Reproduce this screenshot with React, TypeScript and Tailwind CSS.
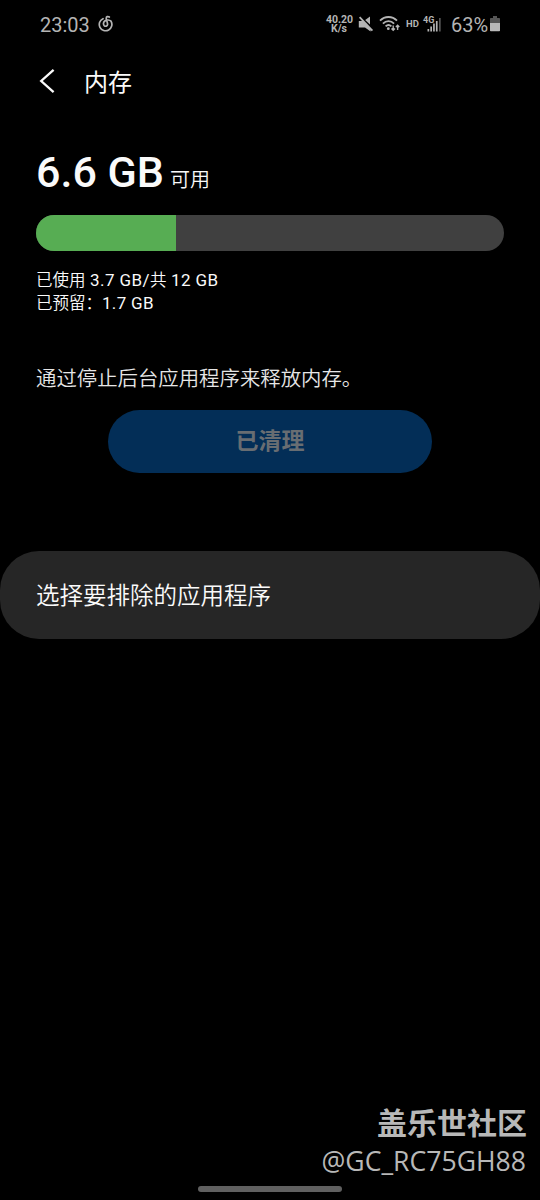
import type { ReactNode } from "react";

const USED_PERCENT = 30;

function MusicIcon() {
  return (
    <svg width="16" height="18" viewBox="0 0 16 18" fill="none" stroke="#b4b4b4" strokeWidth="1.7" strokeLinecap="round">
      <path d="M5 3.7A6.3 6.3 0 1 0 13 6.2C11.6 4.7 8.6 4.6 6.8 6C5.1 7.4 5.2 9.5 6.2 10.6C7.4 11.8 9.5 11.2 9.6 9.4C9.6 7.8 8.2 4.6 8.2 3.2C8.3 1.6 9.9 1.1 11.3 2" />
    </svg>
  );
}

function MuteIcon() {
  return (
    <svg width="16" height="18" viewBox="0 0 16 18" fill="#b4b4b4">
      <path d="M0.8 6H5L12.6 13.6V16.6L7 12.6H0.8Z" />
      <path d="M7.2 4.9L12 1.4V9.6Z" />
      <path d="M1.6 2.2L14.4 15.6" stroke="#b4b4b4" strokeWidth="1.8" />
    </svg>
  );
}

function WifiIcon() {
  return (
    <svg width="22" height="18" viewBox="0 0 22 18" fill="none" stroke="#b4b4b4" strokeWidth="1.8">
      <path d="M1 5.6C5.8 0.8 13.2 0.8 18 5.6" />
      <path d="M3.9 8.6C7.2 5.4 11.8 5.4 15.1 8.6" />
      <path d="M6.6 11.4C8.3 9.8 10.7 9.8 12.4 11.4" />
      <circle cx="9.3" cy="13.7" r="1.4" fill="#b4b4b4" stroke="none" />
      <path d="M14.2 10.6V15M12.5 13.4L14.2 15.2L15.9 13.4M18.6 15V10.4M16.9 12L18.6 10.2L20.3 12" strokeWidth="1.4" />
    </svg>
  );
}

function SignalIcon() {
  return (
    <svg width="15" height="14" viewBox="0 0 15 14" fill="#b4b4b4">
      <rect x="0.5" y="11" width="1.7" height="2.5" />
      <rect x="3.3" y="8.5" width="1.7" height="5" />
      <rect x="6.1" y="5.5" width="1.7" height="8" />
      <rect x="8.9" y="3" width="1.7" height="10.5" />
      <rect x="12" y="0" width="1.7" height="13.5" fill="#555555" />
    </svg>
  );
}

function BatteryIcon() {
  return (
    <svg width="10" height="16" viewBox="0 0 10 16">
      <path d="M3 0H7V2H9.2Q10 2 10 2.8V7H0V2.8Q0 2 0.8 2H3Z" fill="#555555" />
      <path d="M0 7H10V14.4Q10 15.2 9.2 15.2H0.8Q0 15.2 0 14.4Z" fill="#b9b9b9" />
    </svg>
  );
}

function StatusBar() {
  return (
    <header className="flex h-12 items-center pr-10 pl-10 text-[#b4b4b4]">
      <span className="text-[20px] leading-6 pt-0.5">23:03</span>
      <div className="ml-[8px]">
        <MusicIcon />
      </div>
      <div className="ml-auto flex items-center">
        <div className="w-[26px] text-center text-[10.5px] leading-[9px] font-bold">
          <p>40.20</p>
          <p>K/s</p>
        </div>
        <div className="ml-[6px]">
          <MuteIcon />
        </div>
        <div className="ml-[5px]">
          <WifiIcon />
        </div>
        <span className="ml-[5px] w-[15px] text-[9.5px] leading-3 font-bold">HD</span>
        <div className="relative ml-[6px] pt-[1px]">
          <SignalIcon />
          <span className="absolute -top-[2px] -left-[4px] text-[9px] leading-[10px] font-bold">4G</span>
        </div>
        <span className="ml-[9px] w-[39px] pt-0.5 text-[20px] leading-6">63%</span>
        <BatteryIcon />
      </div>
    </header>
  );
}

function TitleBar({ children }: { children: ReactNode }) {
  return (
    <div className="flex h-[66px] items-center pl-[39px]">
      <svg width="16" height="26" viewBox="0 0 16 26" fill="none" stroke="#fafafa" strokeWidth="2.3">
        <path d="M14.6 1.8L2.2 13L14.6 24.2" />
      </svg>
      <h1 className="ml-[29px] pt-1 text-[24px] leading-8">{children}</h1>
    </div>
  );
}

export default function App() {
  return (
    <div className="relative flex h-[1200px] w-[540px] flex-col overflow-hidden bg-black font-[Roboto,'Noto_Sans_CJK_SC',sans-serif] text-[#fafafa]">
      <StatusBar />
      <TitleBar>内存</TitleBar>

      <main className="flex flex-col">
        <section className="px-9 pt-[28px]">
          <p className="flex h-[60px] items-baseline leading-[60px]">
            <span className="text-[43px] font-medium">6.6 GB</span>
            <span className="ml-[6px] text-[20px] font-[350]">可用</span>
          </p>
          <div className="mt-[13px] h-9 overflow-hidden rounded-full bg-[#404040]">
            <div className="h-full bg-[#57ad53]" style={{ width: `${USED_PERCENT}%` }} />
          </div>
          <div className="mt-[18px] text-[16.5px] leading-[23px]">
            <p className="font-[350]">
              已使用<span className="text-[17px] font-normal tracking-[0.4px]"> 3.7 GB/</span>共
              <span className="text-[17px] font-normal tracking-[0.4px]"> 12 GB</span>
            </p>
            <p className="font-[350]">
              已预留：<span className="text-[17px] font-normal tracking-[0.3px]">1.7 GB</span>
            </p>
          </div>
        </section>

        <section className="mt-[49px] px-9">
          <p className="text-[20.4px] leading-[30px] font-[350] text-[#e6e6e6]">通过停止后台应用程序来释放内存。</p>
          <button
            type="button"
            disabled
            className="mx-auto mt-[15.5px] block h-[63px] w-[324px] rounded-full bg-[#032e57] pt-[3px] text-[23px] font-bold text-[#686d72]"
          >
            已清理
          </button>
        </section>

        <button
          type="button"
          className="mt-[78px] flex h-[88px] w-full items-center rounded-[39px] bg-[#262626] pt-1 pl-9 text-[23.5px] font-[350]"
        >
          选择要排除的应用程序
        </button>
      </main>

      <footer className="mt-auto flex flex-col items-end pr-[14px] text-[#b8b8b8]">
        <p className="mr-[-1px] text-[30px] leading-9 font-bold">盖乐世社区</p>
        <p className="mt-[1px] font-['Open_Sans',sans-serif] text-[26.6px] leading-9">@GC_RC75GH88</p>
        <div className="mt-[7px] mr-[184px] mb-[8px] h-[6px] w-[144px] rounded-full bg-[#606060]" />
      </footer>
    </div>
  );
}
